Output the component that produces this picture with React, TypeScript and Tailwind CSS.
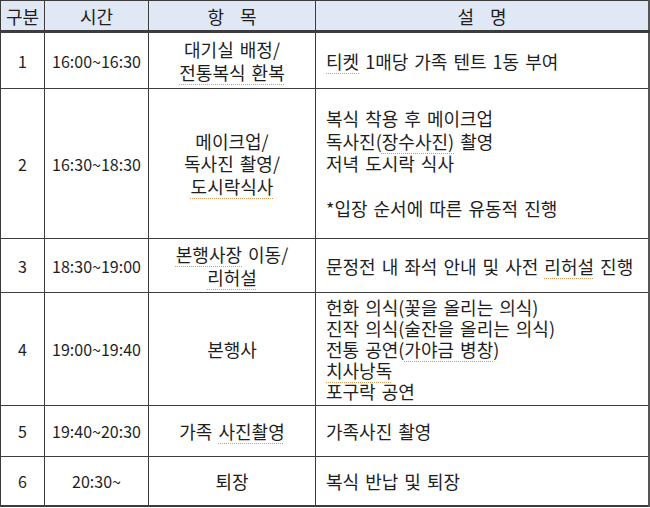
import React from "react";

const U = ({ children }: { children: React.ReactNode }) => (
  <span className="underline decoration-dotted decoration-[#d89a5a] decoration-1 underline-offset-[4px]">{children}</span>
);

const rows: { no: string; time: string; item: React.ReactNode; desc: React.ReactNode; h: string; descLeading: string }[] = [
  {
    no: "1",
    time: "16:00~16:30",
    item: (
      <>
        대기실 배정/
        <br />
        <U>전통복식 환복</U>
      </>
    ),
    desc: (
      <>
        <U>티켓</U> 1매당 가족 텐트 1동 부여
      </>
    ),
    h: "h-[57px]",
    descLeading: "leading-[22px]",
  },
  {
    no: "2",
    time: "16:30~18:30",
    item: (
      <>
        메이크업/
        <br />
        독사진 촬영/
        <br />
        <U>도시락식사</U>
      </>
    ),
    desc: (
      <>
        복식 착용 후 메이크업
        <br />
        독사진(<U>장수사진)</U> 촬영
        <br />
        저녁 도시락 식사
        <br />
        <br />
        *입장 순서에 따른 유동적 진행
      </>
    ),
    h: "h-[150px]",
    descLeading: "leading-[22.5px]",
  },
  {
    no: "3",
    time: "18:30~19:00",
    item: (
      <>
        <U>본행사장</U> 이동/
        <br />
        <U>리허설</U>
      </>
    ),
    desc: (
      <>
        문정전 내 좌석 안내 및 사전 <U>리허설</U> 진행
      </>
    ),
    h: "h-[54px]",
    descLeading: "leading-[22px]",
  },
  {
    no: "4",
    time: "19:00~19:40",
    item: <>본행사</>,
    desc: (
      <>
        헌화 의식(꽃을 올리는 의식)
        <br />
        진작 의식(술잔을 올리는 의식)
        <br />
        전통 공연(<U>가야금 병창</U>)
        <br />
        <U>치사낭독</U>
        <br />
        포구락 공연
      </>
    ),
    h: "h-[113px]",
    descLeading: "leading-[21px]",
  },
  {
    no: "5",
    time: "19:40~20:30",
    item: (
      <>
        가족 <U>사진촬영</U>
      </>
    ),
    desc: <>가족사진 촬영</>,
    h: "h-[51px]",
    descLeading: "leading-[22px]",
  },
  {
    no: "6",
    time: "20:30~",
    item: <>퇴장</>,
    desc: <>복식 반납 및 퇴장</>,
    h: "h-[49px]",
    descLeading: "leading-[22px]",
  },
];

export default function App() {
  return (
    <div
      className="w-[650px] h-[508px] bg-white text-[#1e1e1e] overflow-hidden"
      style={{ fontFamily: '"Noto Sans CJK KR", "Noto Sans", sans-serif' }}
    >
      <table className="table-fixed border-collapse w-[649px] text-[16px]">
        <colgroup>
          <col className="w-[44px]" />
          <col className="w-[104px]" />
          <col className="w-[167px]" />
          <col className="w-[334px]" />
        </colgroup>
        <thead>
          <tr className="h-[31px] bg-[#dfe8f4]">
            <th className="border border-[#3c3c3c] border-b-[3px] border-b-double font-normal text-center p-0 text-[18px] leading-[20px]">구분</th>
            <th className="border border-[#3c3c3c] border-b-[3px] border-b-double font-normal text-center p-0 text-[18px] leading-[20px]">시간</th>
            <th className="border border-[#3c3c3c] border-b-[3px] border-b-double font-normal text-center p-0 text-[18px] leading-[20px]">
              <U>
                <span className="inline-flex gap-[16px]">
                  <span>항</span>
                  <span>목</span>
                </span>
              </U>
            </th>
            <th className="border border-[#3c3c3c] border-r-[3px] border-r-[#555] border-b-[3px] border-b-double font-normal text-center p-0 text-[18px] leading-[20px]">
              <U>
                <span className="inline-flex gap-[16px]">
                  <span>설</span>
                  <span>명</span>
                </span>
              </U>
            </th>
          </tr>
        </thead>
        <tbody>
          {rows.map((r, i) => (
            <tr key={r.no} className={r.h}>
              <td className={`border border-[#3c3c3c] text-center p-0 leading-[22px] ${i === rows.length - 1 ? "border-b-2" : ""}`}>{r.no}</td>
              <td className={`border border-[#3c3c3c] text-center p-0 leading-[22px] ${i === rows.length - 1 ? "border-b-2" : ""}`}>{r.time}</td>
              <td className={`border border-[#3c3c3c] text-center p-0 text-[18px] [word-spacing:2px] leading-[22.5px] ${i === rows.length - 1 ? "border-b-2" : ""}`}>{r.item}</td>
              <td className={`border border-[#3c3c3c] border-r-[3px] border-r-[#555] text-left pl-[10px] pr-0 py-0 text-[18px] [word-spacing:2px] ${r.descLeading} ${i === rows.length - 1 ? "border-b-2" : ""}`}>{r.desc}</td>
            </tr>
          ))}
        </tbody>
      </table>
    </div>
  );
}
